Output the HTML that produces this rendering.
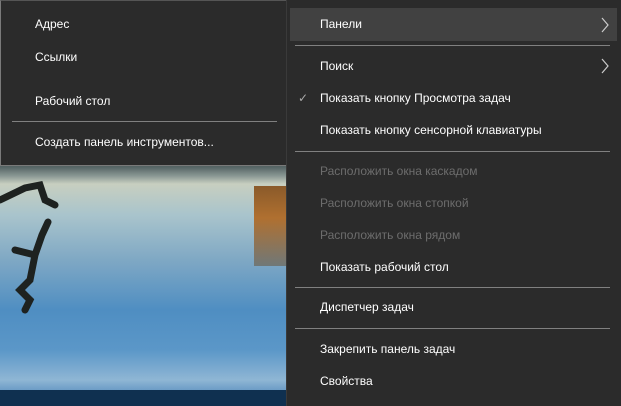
<!DOCTYPE html><html><head><meta charset="utf-8"><style>
body{margin:0;width:621px;height:406px;overflow:hidden;position:relative;background:#2b2b2b;font-family:"Liberation Sans","DejaVu Sans",sans-serif;font-size:12px;color:#fff}
.a{position:absolute;white-space:nowrap;line-height:14px}
.d{color:#6d6d6d}
.sep{position:absolute;height:1px;background:#808080}
</style></head><body>
<div style="position:absolute;left:0;top:160px;width:286px;height:230px;background:linear-gradient(180deg,#3d4a4c 0,#5b6a6a 8px,#8a9894 16px,#c8cfc0 24px,#a9c4cc 55px,#7fa8c4 100px,#4f8ec2 150px,#5b97c8 190px,#8fb6d4 220px,#6c9cc6 230px)"></div>
<div style="position:absolute;left:254px;top:186px;width:32px;height:80px;background:linear-gradient(180deg,#8a5a2a,#b07030 40%,#707878)"></div>
<svg style="position:absolute;left:0;top:160px" width="70" height="160"><path d="M0 40 L25 28 L40 25 L45 40 L55 45 M48 62 L42 75 L35 95 L15 90 M35 95 L30 120 L20 130 L30 140 L25 150" stroke="#1e2220" stroke-width="7" fill="none" stroke-linecap="round"/></svg>
<div style="position:absolute;left:0;top:390px;width:286px;height:16px;background:#0f3050"></div>
<div style="position:absolute;left:0;top:0;width:286px;height:164px;background:#2b2b2b;border:1px solid #7a7a7a;border-top-color:#555"></div>
<div style="position:absolute;left:286px;top:0;width:335px;height:406px;background:#2b2b2b;border-left:1px solid #3a3a3a"></div>
<div style="position:absolute;left:290px;top:8px;width:327px;height:33px;background:#414141"></div>
<div class="a" style="left:35px;top:17px">Адрес</div>
<div class="a" style="left:35px;top:50px">Ссылки</div>
<div class="a" style="left:35px;top:94px">Рабочий стол</div>
<div class="sep" style="left:12px;top:121px;width:265px"></div>
<div class="a" style="left:35px;top:135px">Создать панель инструментов...</div>
<div class="a" style="left:320px;top:17px">Панели</div>
<div class="sep" style="left:295px;top:45px;width:315px"></div>
<div class="a" style="left:320px;top:59px">Поиск</div>
<div class="a" style="left:298px;top:91px;color:#aaa">✓</div>
<div class="a" style="left:320px;top:91px">Показать кнопку Просмотра задач</div>
<div class="a" style="left:320px;top:123px">Показать кнопку сенсорной клавиатуры</div>
<div class="sep" style="left:295px;top:151px;width:315px"></div>
<div class="a d" style="left:320px;top:164px">Расположить окна каскадом</div>
<div class="a d" style="left:320px;top:196px">Расположить окна стопкой</div>
<div class="a d" style="left:320px;top:228px">Расположить окна рядом</div>
<div class="a" style="left:320px;top:260px">Показать рабочий стол</div>
<div class="sep" style="left:295px;top:287px;width:315px"></div>
<div class="a" style="left:320px;top:300px">Диспетчер задач</div>
<div class="sep" style="left:295px;top:328px;width:315px"></div>
<div class="a" style="left:320px;top:342px">Закрепить панель задач</div>
<div class="a" style="left:320px;top:374px">Свойства</div>
<svg style="position:absolute;left:600px;top:17px" width="10" height="16"><path d="M2 1 L8 8 L2 15" stroke="#ccc" fill="none" stroke-width="1.2"/></svg>
<svg style="position:absolute;left:600px;top:58px" width="10" height="16"><path d="M2 1 L8 8 L2 15" stroke="#ccc" fill="none" stroke-width="1.2"/></svg>
</body></html>
